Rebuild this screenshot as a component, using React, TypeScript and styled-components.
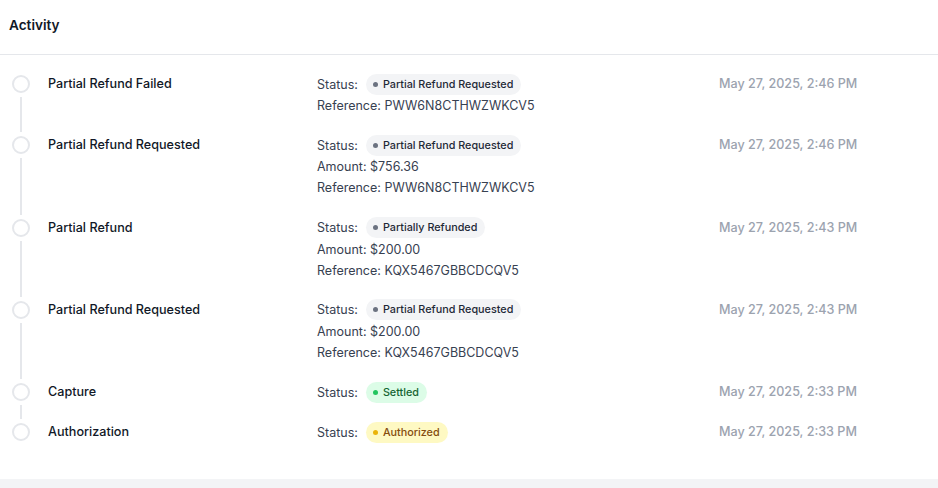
import React from "react";
import styled, { createGlobalStyle } from "styled-components";

const Global = createGlobalStyle`
  html, body { margin: 0; padding: 0; background: #f3f4f6; }
  body { font-family: Inter, "Noto Sans", Arial, sans-serif; -webkit-font-smoothing: antialiased; }
`;

const Card = styled.section`
  background: #ffffff;
  width: 100%;
`;

const Header = styled.header`
  padding: 15px 9px 19px;
  border-bottom: 1px solid #e5e7eb;
`;

const Title = styled.h2`
  margin: 0;
  font-size: 13.6px;
  line-height: 20px;
  font-weight: 600;
  color: #111827;
`;

const List = styled.ol`
  list-style: none;
  margin: 0;
  padding: 18px 0 17px 12px;
`;

const Row = styled.li`
  display: grid;
  grid-template-columns: 36px 269px 402px 1fr;
`;

const Rail = styled.div`
  display: flex;
  flex-direction: column;
  align-items: flex-start;
  padding-top: 2px;
`;

const Dot = styled.span`
  box-sizing: border-box;
  width: 18px;
  height: 18px;
  border-radius: 50%;
  border: 2px solid #e5e7eb;
  background: #fff;
`;

const Line = styled.span`
  flex: 1;
  width: 2px;
  margin: 4px 0 2px 8px;
  background: #e5e7eb;
`;

const Cell = styled.div`
  padding-bottom: 18.3px;
`;

const EventName = styled.div`
  font-size: 12.6px;
  font-weight: 500;
  line-height: 22px;
  color: #111827;
`;

const Detail = styled.div<{ $first?: boolean }>`
  display: flex;
  align-items: center;
  height: ${(p) => (p.$first ? "22px" : "21px")};
  font-size: 12.5px;
  color: #374151;
`;

const Label = styled.span`
  margin-right: 8px;
`;

type Tone = "gray" | "green" | "yellow";

const tones: Record<Tone, { bg: string; fg: string; dot: string }> = {
  gray: { bg: "#f3f4f6", fg: "#1f2937", dot: "#6b7280" },
  green: { bg: "#dcfce7", fg: "#166534", dot: "#22c55e" },
  yellow: { bg: "#fef9c3", fg: "#854d0e", dot: "#eab308" },
};

const Badge = styled.span<{ $tone: Tone }>`
  display: inline-flex;
  align-items: center;
  gap: 5px;
  height: 21px;
  padding: 0 8px 0 7px;
  border-radius: 11px;
  background: ${(p) => tones[p.$tone].bg};
  color: ${(p) => tones[p.$tone].fg};
  font-size: 10.8px;
  font-weight: 500;
  &::before {
    content: "";
    width: 5px;
    height: 5px;
    border-radius: 50%;
    background: ${(p) => tones[p.$tone].dot};
  }
`;

const Time = styled.div`
  font-size: 12.6px;
  line-height: 22px;
  color: #9ca3af;
  font-weight: 500;
`;

type Item = {
  name: string;
  status: string;
  tone: Tone;
  amount?: string;
  reference?: string;
  time: string;
};

const items: Item[] = [
  { name: "Partial Refund Failed", status: "Partial Refund Requested", tone: "gray", reference: "PWW6N8CTHWZWKCV5", time: "May 27, 2025, 2:46 PM" },
  { name: "Partial Refund Requested", status: "Partial Refund Requested", tone: "gray", amount: "$756.36", reference: "PWW6N8CTHWZWKCV5", time: "May 27, 2025, 2:46 PM" },
  { name: "Partial Refund", status: "Partially Refunded", tone: "gray", amount: "$200.00", reference: "KQX5467GBBCDCQV5", time: "May 27, 2025, 2:43 PM" },
  { name: "Partial Refund Requested", status: "Partial Refund Requested", tone: "gray", amount: "$200.00", reference: "KQX5467GBBCDCQV5", time: "May 27, 2025, 2:43 PM" },
  { name: "Capture", status: "Settled", tone: "green", time: "May 27, 2025, 2:33 PM" },
  { name: "Authorization", status: "Authorized", tone: "yellow", time: "May 27, 2025, 2:33 PM" },
];

export default function App() {
  return (
    <>
      <Global />
      <Card>
        <Header>
          <Title>Activity</Title>
        </Header>
        <List>
          {items.map((it, i) => (
            <Row key={i}>
              <Rail>
                <Dot />
                {i < items.length - 1 && <Line />}
              </Rail>
              <Cell>
                <EventName>{it.name}</EventName>
              </Cell>
              <Cell>
                <Detail $first>
                  <Label>Status:</Label>
                  <Badge $tone={it.tone}>{it.status}</Badge>
                </Detail>
                {it.amount && <Detail>Amount: {it.amount}</Detail>}
                {it.reference && <Detail>Reference: {it.reference}</Detail>}
              </Cell>
              <Cell>
                <Time>{it.time}</Time>
              </Cell>
            </Row>
          ))}
        </List>
      </Card>
    </>
  );
}
